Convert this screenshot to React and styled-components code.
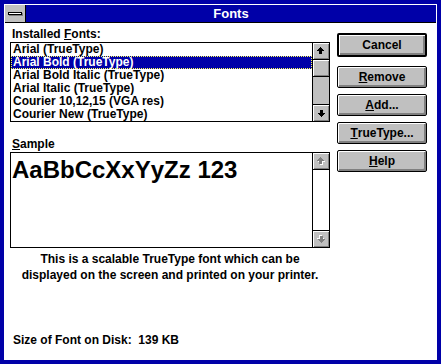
import styled, { createGlobalStyle } from "styled-components";

const GlobalStyle = createGlobalStyle`
    body {
        margin: 0;
        background: #ffffff;
    }
`;

const fonts = [
    "Arial (TrueType)",
    "Arial Bold (TrueType)",
    "Arial Bold Italic (TrueType)",
    "Arial Italic (TrueType)",
    "Courier 10,12,15 (VGA res)",
    "Courier New (TrueType)",
];

function Arrow({ down, disabled }) {
    const d = "M3.5 0 L7 4 H5 V7 H2 V4 H0 Z";
    return (
        <svg width="8" height="8" viewBox="0 0 8 8" shapeRendering="crispEdges"
            style={{ transform: down ? "rotate(180deg)" : "none" }}>
            {disabled && <path d={d} fill="#ffffff" transform="translate(1 1)" />}
            <path d={d} fill={disabled ? "#808080" : "#000000"} />
        </svg>
    );
}

export default function App() {
    return (
        <Window>
            <GlobalStyle />
            <TitleBar>
                <SysMenu><span /></SysMenu>
                <Title>Fonts</Title>
            </TitleBar>

            <Client>
                <LeftCol>
                    <Label>Installed <u>F</u>onts:</Label>
                    <ListBox>
                        <Rows>
                            {fonts.map((f, i) => (
                                <Row key={f} $selected={i === 1}>{f}</Row>
                            ))}
                        </Rows>
                        <ScrollBar>
                            <ArrowBtn><Arrow /></ArrowBtn>
                            <Thumb />
                            <Track />
                            <ArrowBtn $bottom><Arrow down /></ArrowBtn>
                        </ScrollBar>
                    </ListBox>

                    <Label $gap>
                        <u>S</u>ample
                    </Label>
                    <SampleBox>
                        <SampleText>AaBbCcXxYyZz 123</SampleText>
                        <ScrollBar>
                            <ArrowBtn><Arrow disabled /></ArrowBtn>
                            <Track $disabled />
                            <ArrowBtn $bottom><Arrow down disabled /></ArrowBtn>
                        </ScrollBar>
                    </SampleBox>

                    <Description>
                        This is a scalable TrueType font which can be<br />
                        displayed on the screen and printed on your printer.
                    </Description>

                    <SizeInfo>Size of Font on Disk:&nbsp;&nbsp;139 KB</SizeInfo>
                </LeftCol>

                <RightCol>
                    <Button $default>Cancel</Button>
                    <Button><u>R</u>emove</Button>
                    <Button><u>A</u>dd...</Button>
                    <Button><u>T</u>rueType...</Button>
                    <Button><u>H</u>elp</Button>
                </RightCol>
            </Client>
        </Window>
    );
}

const Window = styled.div`
    width: 441px;
    height: 364px;
    box-sizing: border-box;
    border: 4px solid #0000a8;
    background: #ffffff;
    display: flex;
    flex-direction: column;
    font-family: "Liberation Sans", Arial, sans-serif;
    font-weight: bold;
    font-size: 12px;
    color: #000000;
`;

const TitleBar = styled.div`
    display: flex;
    height: 17px;
    margin: 1px 1px 0 1px;
    border-bottom: 1px solid #000000;
`;

const SysMenu = styled.div`
    width: 20px;
    background: #c0c0c0;
    border-right: 1px solid #000000;
    display: flex;
    align-items: center;
    justify-content: center;

    span {
        width: 12px;
        height: 1px;
        background: #ffffff;
        border: 1px solid #000000;
        box-shadow: 1px 1px 0 #808080;
    }
`;

const Title = styled.div`
    flex: 1;
    background: #0000a8;
    color: #ffffff;
    font-size: 13px;
    line-height: 17px;
    text-align: center;
`;

const Client = styled.div`
    flex: 1;
    display: flex;
    padding: 5px 0 13px 6px;
`;

const LeftCol = styled.div`
    width: 320px;
    display: flex;
    flex-direction: column;
`;

const Label = styled.div`
    line-height: 13px;
    margin-top: ${(p) => (p.$gap ? "16px" : "0")};
    margin-bottom: 1px;
    padding-left: 2px;
`;

const ListBox = styled.div`
    display: flex;
    height: 78px;
    border: 1px solid #000000;
`;

const Rows = styled.div`
    flex: 1;
    overflow: hidden;
`;

const Row = styled.div`
    height: 13px;
    line-height: 13px;
    padding-left: 2px;
    white-space: nowrap;
    box-sizing: border-box;
    background: ${(p) => (p.$selected ? "#0000a8" : "transparent")};
    color: ${(p) => (p.$selected ? "#ffffff" : "#000000")};
    outline: ${(p) => (p.$selected ? "1px dotted #ffff54" : "none")};
    outline-offset: -1px;
`;

const ScrollBar = styled.div`
    width: 16px;
    border-left: 1px solid #000000;
    display: flex;
    flex-direction: column;
`;

const ArrowBtn = styled.div`
    height: 16px;
    flex-shrink: 0;
    background: #c0c0c0;
    box-shadow: inset 1px 1px 0 #ffffff, inset -1px -1px 0 #808080;
    display: flex;
    align-items: center;
    justify-content: center;
    border-top: ${(p) => (p.$bottom ? "1px solid #000000" : "none")};
    border-bottom: ${(p) => (p.$bottom ? "none" : "1px solid #000000")};
`;

const Thumb = styled.div`
    height: 16px;
    flex-shrink: 0;
    background: #c0c0c0;
    box-shadow: inset 1px 1px 0 #ffffff, inset -1px -1px 0 #808080;
    border-bottom: 1px solid #000000;
`;

const Track = styled.div`
    flex: 1;
    background: ${(p) => (p.$disabled ? "#ffffff" : "#c0c0c0")};
`;

const SampleBox = styled.div`
    display: flex;
    height: 94px;
    border: 1px solid #000000;
`;

const SampleText = styled.div`
    flex: 1;
    padding: 3px 0 0 1px;
    font-size: 24px;
    line-height: 28px;
    white-space: nowrap;
`;

const Description = styled.div`
    margin-top: 3px;
    line-height: 16px;
    text-align: center;
`;

const SizeInfo = styled.div`
    margin-top: auto;
    line-height: 13px;
    padding-left: 3px;
`;

const RightCol = styled.div`
    width: 90px;
    margin-left: 7px;
    padding-top: 5px;
    display: flex;
    flex-direction: column;
    gap: 6px;
`;

const Button = styled.div`
    height: ${(p) => (p.$default ? "24px" : "22px")};
    margin-bottom: ${(p) => (p.$default ? "3px" : "0")};
    box-sizing: border-box;
    border: ${(p) => (p.$default ? "2px" : "1px")} solid #000000;
    border-radius: 2px;
    background: #c0c0c0;
    box-shadow: inset 1px 1px 0 #ffffff, inset -2px -2px 0 #808080;
    display: flex;
    align-items: center;
    justify-content: center;
    line-height: 13px;
`;
